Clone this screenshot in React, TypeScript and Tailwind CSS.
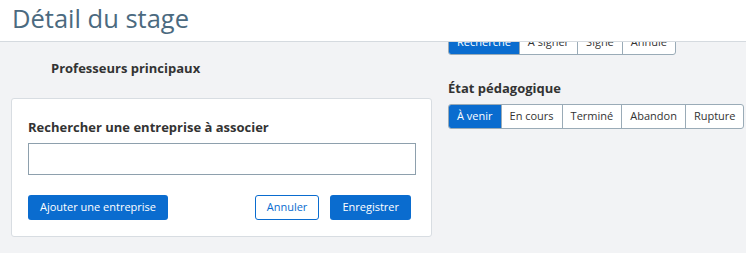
import React from "react";

const font = { fontFamily: '"Open Sans", "Noto Sans", sans-serif' };

function Group({ items, active }: { items: string[]; active: number }) {
  return (
    <div className="flex h-[25px] rounded-[3px] border border-[#9aabb7] bg-white overflow-hidden">
      {items.map((t, i) => (
        <div
          key={t}
          className={
            i === active
              ? "flex shrink-0 whitespace-nowrap items-center px-[8px] bg-[#0a6ccf] text-white text-[11px]"
              : "flex shrink-0 whitespace-nowrap items-center px-[8px] border-l border-[#9aabb7] text-[#333] text-[11px]"
          }
        >
          {t}
        </div>
      ))}
    </div>
  );
}

export default function App() {
  return (
    <div className="relative w-[746px] h-[253px] bg-[#f2f3f5] overflow-hidden" style={font}>
      <div className="absolute top-0 left-0 right-0 h-[42px] bg-white border-b border-[#d5dadf] z-10 flex items-center pl-[12px]">
        <h1 className="text-[25.5px] leading-none text-[#4b6a80] font-normal -mt-[3px] whitespace-nowrap">Détail du stage</h1>
      </div>
      <div className="flex pt-[30px] pl-[11px]">
        <div className="w-[421px] shrink-0 flex flex-col">
          <div className="h-[68px] flex items-start pt-[29px] pl-[40px]">
            <span className="text-[13px] font-bold text-[#333] leading-[18px] whitespace-nowrap">Professeurs principaux</span>
          </div>
          <div className="h-[139px] bg-white border border-[#d8dde2] rounded-[3px] px-[16px] pt-[18px]">
            <div className="text-[13px] font-bold text-[#333] leading-[20px] whitespace-nowrap">Rechercher une entreprise à associer</div>
            <div className="mt-[6px] h-[32px] w-[388px] border border-[#8ea0ad] bg-white"></div>
            <div className="mt-[20px] flex items-center w-[383px]">
              <button className="h-[25px] px-[12px] rounded-[3px] bg-[#0a6ccf] text-white text-[11px] whitespace-nowrap">Ajouter une entreprise</button>
              <div className="flex-1" />
              <button className="h-[25px] px-[11px] rounded-[3px] border border-[#0a6ccf] bg-white text-[#0a6ccf] text-[11px] whitespace-nowrap">Annuler</button>
              <button className="ml-[11px] h-[25px] px-[12px] rounded-[3px] bg-[#0a6ccf] text-white text-[11px] whitespace-nowrap">Enregistrer</button>
            </div>
          </div>
        </div>
        <div className="ml-[16px] flex flex-col items-start">
          <Group items={["Recherche", "À signer", "Signé", "Annulé"]} active={0} />
          <div className="mt-[24px] text-[13px] font-bold text-[#333] leading-[18px] whitespace-nowrap">État pédagogique</div>
          <div className="mt-[7px]">
            <Group items={["À venir", "En cours", "Terminé", "Abandon", "Rupture"]} active={0} />
          </div>
        </div>
      </div>
    </div>
  );
}
